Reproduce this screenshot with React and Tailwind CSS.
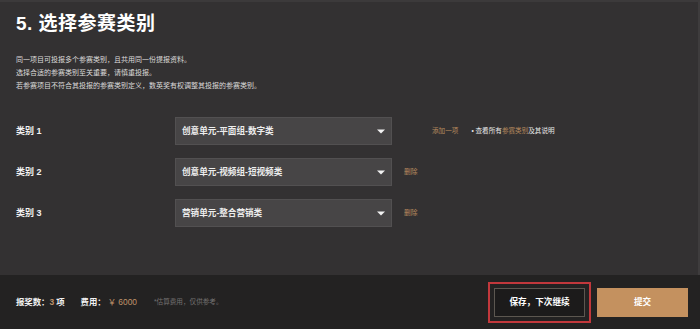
const rows = [
    { label: '类别 1', value: '创意单元-平面组-数字类', first: true },
    { label: '类别 2', value: '创意单元-视频组-短视频类' },
    { label: '类别 3', value: '营销单元-整合营销类' },
];

const Caret = () => (
    <svg width="8" height="5" viewBox="0 0 8 5" className="shrink-0">
        <path d="M0 0.5 L8 0.5 L4 4.5 Z" fill="#f2f2f2" />
    </svg>
);

export default function App() {
    return (
        <div
            className="w-[700px] h-[329px] flex flex-col bg-[#333132] text-white overflow-hidden"
            style={{ fontFamily: '"Liberation Sans", "Noto Sans CJK SC", sans-serif' }}
        >
            {/* Main panel */}
            <div className="flex-1 border-t-2 border-t-[#3c3a3b] border-r-2 border-r-[#3e3c3d] px-4">
                <h2 className="mt-[12px] text-[19px] leading-[20px] font-bold tracking-[0.5px]">
                    5. 选择参赛类别
                </h2>

                <div className="mt-[20px] text-[7px] leading-[12.8px] text-[#dddbdb]">
                    <p>同一项目可投报多个参赛类别，且共用同一份提报资料。</p>
                    <p>选择合适的参赛类别至关重要，请慎重投报。</p>
                    <p>若参赛项目不符合其投报的参赛类别定义，数英奖有权调整其投报的参赛类别。</p>
                </div>

                <div className="mt-[25px] flex flex-col gap-[13px]">
                    {rows.map((row) => (
                        <div key={row.label} className="flex items-center h-[28px]">
                            <div className="w-[159px] text-[9px] font-bold text-[#f2f2f2]">{row.label}</div>
                            <div className="w-[217px] h-[28px] flex items-center justify-between pl-[6px] pr-[6px] bg-[#474546] border border-[#525051]">
                                <span className="text-[8.6px] font-bold text-[#ededed]">{row.value}</span>
                                <Caret />
                            </div>
                            {row.first ? (
                                <div className="ml-[40px] flex items-center text-[6.6px]">
                                    <span className="text-[#b88a5e]">添加一项</span>
                                    <span className="ml-[13px] text-[#e6e6e6]">
                                        • 查看所有<span className="text-[#b88a5e]">参赛类别</span>及其说明
                                    </span>
                                </div>
                            ) : (
                                <span className="ml-[12px] text-[6.8px] text-[#b88a5e]">删除</span>
                            )}
                        </div>
                    ))}
                </div>
            </div>

            {/* Footer */}
            <div className="h-[54px] shrink-0 bg-[#232222] flex items-center pl-4 pr-[12px]">
                <div className="flex items-center text-[8.4px] font-bold">
                    <span className="text-[#f2f2f2]">报奖数：</span>
                    <span className="text-[#c0946a]">3</span>
                    <span className="ml-[2px] text-[#f2f2f2]">项</span>
                    <span className="ml-[16px] text-[#f2f2f2]">费用：</span>
                    <span className="ml-[2px] text-[#c0946a] font-normal">￥ 6000</span>
                </div>
                <span className="ml-[17px] text-[6.6px] text-[#737171]">*估算费用，仅供参考。</span>

                <div className="ml-auto flex items-center gap-[12px]">
                    <button className="w-[91px] h-[29px] bg-[#1c1b1b] border border-[#5c5750] text-[8.6px] font-bold text-white outline-2 outline-offset-[4px] outline-[#c2383c]">
                        保存，下次继续
                    </button>
                    <button className="w-[91px] h-[29px] bg-[#c4915f] text-[8.6px] font-bold text-white">
                        提交
                    </button>
                </div>
            </div>
        </div>
    );
}
